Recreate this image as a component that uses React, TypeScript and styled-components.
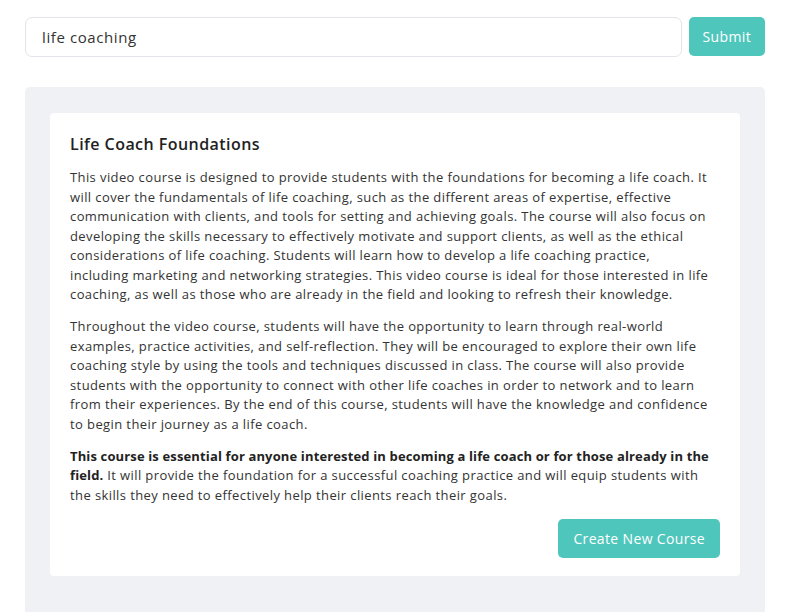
import React from "react";
import styled, { createGlobalStyle } from "styled-components";

const Global = createGlobalStyle`
  html, body { margin: 0; padding: 0; background: #ffffff; }
  body { font-family: "Open Sans", "DejaVu Sans", sans-serif; }
  * { box-sizing: border-box; }
`;

const Page = styled.div`
  padding: 17px 25px 0 25px;
  display: flex;
  flex-direction: column;
  gap: 30px;
  height: 612px;
  overflow: hidden;
`;

const SearchRow = styled.form`
  display: flex;
  gap: 7px;
  align-items: flex-start;
`;

const Input = styled.input`
  flex: 1;
  height: 40px;
  border: 1px solid #e3e4ea;
  border-radius: 7px;
  padding: 0 16px;
  font-family: inherit;
  font-size: 15px;
  letter-spacing: 0.6px;
  color: #333;
  outline: none;
`;

const Button = styled.button<{ $large?: boolean }>`
  background: #4fc6bc;
  color: #fff;
  border: none;
  border-radius: 5px;
  font-family: inherit;
  font-size: 14px;
  font-weight: 500;
  letter-spacing: 0.35px;
  height: 39px;
  padding: 0 ${p => (p.$large ? "15px" : "14px")};
  cursor: pointer;
`;

const Panel = styled.div`
  flex: 1;
  background: #f0f1f5;
  border-radius: 5px 5px 0 0;
  padding: 26px 25px 0 25px;
`;

const Card = styled.div`
  background: #fff;
  border-radius: 4px;
  padding: 19px 20px 18px 20px;
  display: flex;
  flex-direction: column;
`;

const Title = styled.h2`
  margin: 0 0 12px 0;
  font-size: 16px;
  font-weight: 600;
  letter-spacing: 0.45px;
  color: #222;
  line-height: 24px;
`;

const Para = styled.p`
  margin: 0 0 12.5px 0;
  font-size: 13px;
  line-height: 19.5px;
  letter-spacing: 0.4px;
  color: #333;
  strong { color: #222; font-weight: 700; letter-spacing: 0.14px; }
`;

const Actions = styled.div`
  display: flex;
  justify-content: flex-end;
  margin-top: 1px;
`;

const Lines = ({ lines }: { lines: string[] }) => (
  <>
    {lines.map((l, i) => (
      <React.Fragment key={i}>
        {l}
        {i < lines.length - 1 && <br />}
      </React.Fragment>
    ))}
  </>
);

const para1 = [
  "This video course is designed to provide students with the foundations for becoming a life coach. It",
  "will cover the fundamentals of life coaching, such as the different areas of expertise, effective",
  "communication with clients, and tools for setting and achieving goals. The course will also focus on",
  "developing the skills necessary to effectively motivate and support clients, as well as the ethical",
  "considerations of life coaching. Students will learn how to develop a life coaching practice,",
  "including marketing and networking strategies. This video course is ideal for those interested in life",
  "coaching, as well as those who are already in the field and looking to refresh their knowledge.",
];

const para2 = [
  "Throughout the video course, students will have the opportunity to learn through real-world",
  "examples, practice activities, and self-reflection. They will be encouraged to explore their own life",
  "coaching style by using the tools and techniques discussed in class. The course will also provide",
  "students with the opportunity to connect with other life coaches in order to network and to learn",
  "from their experiences. By the end of this course, students will have the knowledge and confidence",
  "to begin their journey as a life coach.",
];

export default function App() {
  return (
    <>
      <Global />
      <Page>
        <SearchRow onSubmit={e => e.preventDefault()}>
          <Input defaultValue="life coaching" />
          <Button type="submit">Submit</Button>
        </SearchRow>
        <Panel>
          <Card>
            <Title>Life Coach Foundations</Title>
            <Para>
              <Lines lines={para1} />
            </Para>
            <Para>
              <Lines lines={para2} />
            </Para>
            <Para>
              <strong>
                This course is essential for anyone interested in becoming a life coach or for those already in the
                <br />
                field.
              </strong>{" "}
              It will provide the foundation for a successful coaching practice and will equip students with
              <br />
              the skills they need to effectively help their clients reach their goals.
            </Para>
            <Actions>
              <Button $large type="button">Create New Course</Button>
            </Actions>
          </Card>
        </Panel>
      </Page>
    </>
  );
}
